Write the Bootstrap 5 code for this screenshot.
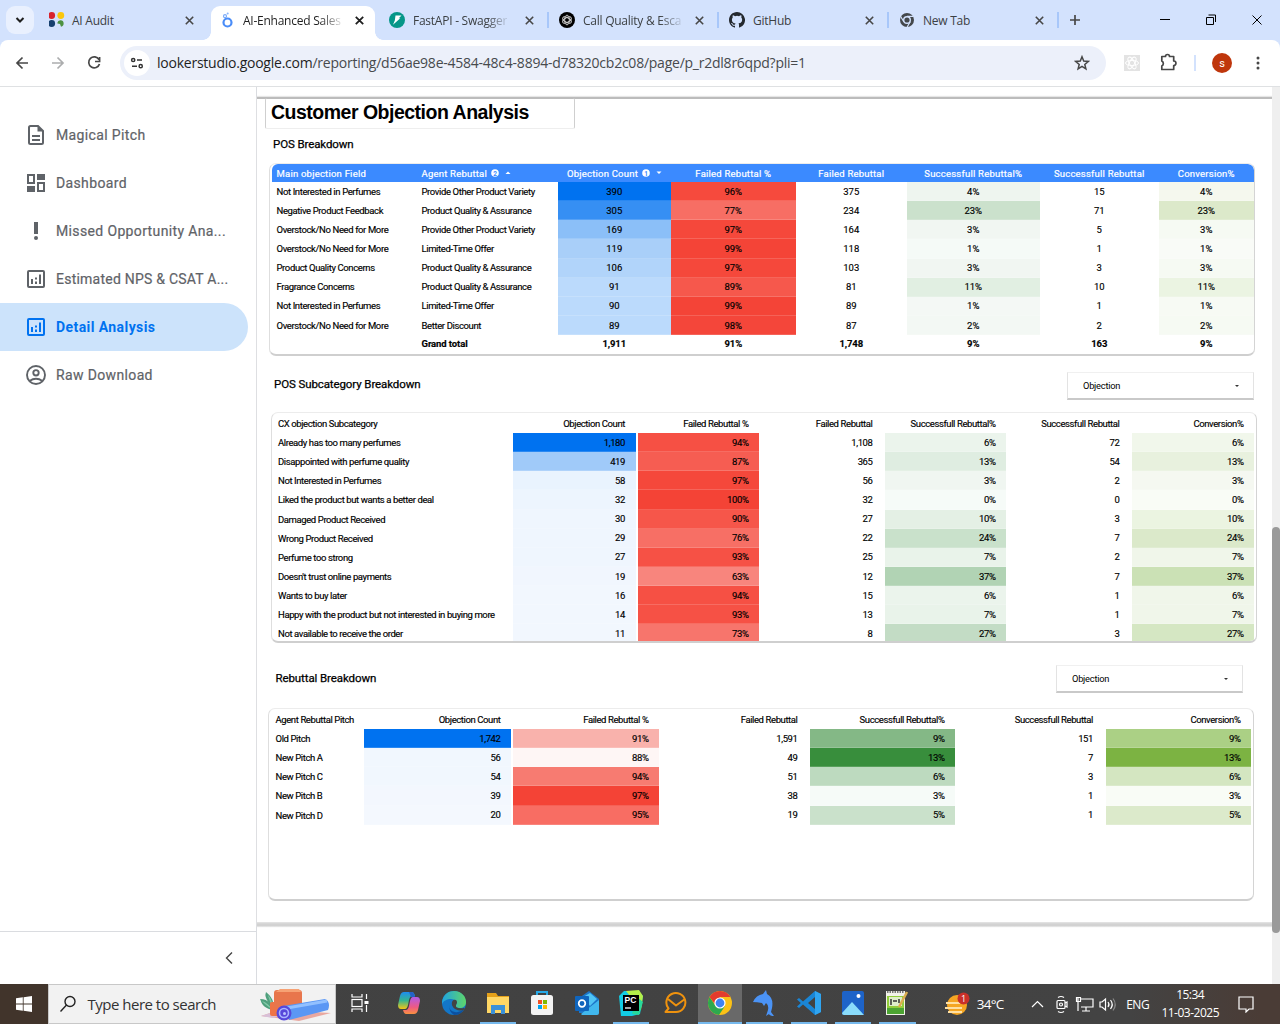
<!DOCTYPE html>
<html lang="en">
<head>
<meta charset="utf-8">
<meta name="viewport" content="width=device-width, initial-scale=1">
<title>AI-Enhanced Sales</title>
<link href="https://cdn.jsdelivr.net/npm/bootstrap@5.3.0/dist/css/bootstrap.min.css" rel="stylesheet">
<style>
html,body{height:1024px;width:1280px;overflow:hidden;background:#fff}
body{font-family:Roboto,"Liberation Sans",sans-serif;color:#000;line-height:1.2}
svg{display:block;flex:none}
/* browser */
.tabstrip{height:40px;background:#d3e2fd;font:12px "Open Sans",sans-serif;color:#3c4043}
.tabsearch{width:28px;height:28px;margin:0 5px 0 6px;border-radius:9px;background:#e9f0fe}
.btab{width:170px;height:40px;padding:0 15.5px 0 10px;position:relative}
.btab .lbl{margin-left:8px;white-space:nowrap;letter-spacing:-.25px}
.btab .fade-end{-webkit-mask-image:linear-gradient(90deg,#000 78%,rgba(0,0,0,.15))}
.btab.sep::after{content:"";position:absolute;right:0;top:12px;width:2px;height:16px;background:#a8c7fa}
.btab.current::before{content:"";position:absolute;left:2px;right:4px;top:6px;bottom:0;background:#fff;border-radius:9px 9px 0 0}
.btab.current{color:#1f1f1f}
.btab.current>*{position:relative}
.foot{position:absolute!important;bottom:0;width:8px;height:8px}
.foot.l{left:-6px;background:radial-gradient(circle at 0 0,#d3e2fd 7.5px,#fff 8px)}
.foot.r{right:-4px;background:radial-gradient(circle at 100% 0,#d3e2fd 7.5px,#fff 8px)}
.tbar{height:47px;border-bottom:1px solid #dfe1e3;background:#fff;border-radius:8px 8px 0 0}
.barwrap{background:#d3e2fd}
.omni{width:986px;height:34px;border-radius:17px;background:#ecf0fa;margin-left:16px;padding:0 16px 0 4px;font:14px "Open Sans",sans-serif;color:#474a4d}
.omni .site{width:26px;height:26px;border-radius:50%;background:#fff}
.url{letter-spacing:-.24px;margin-left:7px;padding-bottom:1px}
.avatar{width:20px;height:20px;border-radius:50%;background:#bf360c;color:#fff;font:11px Roboto;margin-left:16px}
/* sidebar */
.main{height:897px}
.side{width:257px;border-right:1px solid #dadce0}
.side .nav-link{height:48px;padding:0 0 0 26px;gap:10px;color:#5f6368;font-size:14px;letter-spacing:.36px;white-space:nowrap;border-radius:0 24px 24px 0;margin-right:8px;font-weight:400;-webkit-text-stroke:.2px}
.side .nav-link.tight{letter-spacing:.23px}
.side .nav-link.active{background:#cce3fb;color:#0072f0;font-weight:700;letter-spacing:.42px;-webkit-text-stroke:0}
.sidefoot{height:53px;border-top:1px solid #dadce0;padding-right:21px}
/* report */
.report{width:1015px}
.sheet{height:829px;margin-top:10px;border-top:2px solid #bcbcbc;box-shadow:0 -1px 1px #e6e6e6,0 1px 1px #e6e6e6}
.sheetend{height:5px;background:linear-gradient(#e6e6e6,#d2d2d2 40%,#d2d2d2 75%,#eee);margin-top:-4px}
.ttl{width:310px;height:31px;margin:-1px 0 0 8px;padding:0 5px;border:solid #cfcfcf;border-width:0 1px 1px;border-bottom-color:#eee;font:bold 19.5px "Liberation Sans",sans-serif;border-radius:2px;line-height:28px;white-space:nowrap;letter-spacing:-.5px}
.sec{font-size:11.5px;-webkit-text-stroke:.25px;white-space:nowrap;letter-spacing:-.1px}
.s1{margin:9px 0 0 16px;height:14px}
.p1{margin:11px 0 0 12px;height:193px}
.bar2{margin:15px 18px 0 17px;height:30px;align-items:center}
.bar2 .sec{padding-bottom:2px}
.p2{margin:11px 0 0 14px;height:231px}
.bar3{margin:21px 29px 0 18.500px;height:30px;align-items:center}
.p3{margin:14px 0 0 11px;height:193px}
.pane{border-radius:7px;background:#fff;border:1px solid #ececec;border-bottom:2px solid #cfcfcf;border-right-color:#d4d4d4;border-left-color:#dedede;overflow:hidden;width:986px}
.grid{table-layout:fixed;border-collapse:collapse;font-size:9.5px;line-height:11px;-webkit-text-stroke:.15px}
.grid td{padding:0 0 1px}
.grid th{padding:0}
.grid td,.grid th{font-weight:400;white-space:nowrap;height:19.15px;vertical-align:middle;overflow:visible}
.grid tbody td{box-shadow:inset 0 -1px rgba(255,255,255,.16)}
.g1{width:982px;margin-left:1.500px}
.g1 th{height:18px;background:#3b8aff;color:#fff;letter-spacing:.22px;-webkit-text-stroke:.2px;padding-top:1px}
.g1 th:first-child{border-top-left-radius:6px}
.g1 th:last-child{border-top-right-radius:6px}
.g1 td,.g1 th{text-align:center}
.g1 th:nth-child(-n+2),.g1 td:nth-child(-n+2){text-align:left;padding-left:5px}
.g1 td:nth-child(-n+2){letter-spacing:-.38px}
.g1 tr.tot td{font-weight:700;height:17px;letter-spacing:-.1px}
.g2{width:982px}
.g3{width:981.5px;margin-left:.5px}
.gr{letter-spacing:-.4px}
.gr td,.gr th{text-align:right;padding-right:10.5px}
.gr td:first-child,.gr th:first-child{text-align:left;padding:0 0 0 6px}
.gr th{height:20px;padding-top:1px}
.gr td:nth-child(3),.gr th:nth-child(3){padding:0}
.gr td:nth-child(5),.gr th:nth-child(5),.gr td:nth-child(7),.gr th:nth-child(7){padding-right:12.5px}
.dd{width:187px;height:28px;background:#fff;border:1px solid #e3e3e3;border-bottom:2px solid #c9c9c9;border-top-color:#f0f0f0;font-size:9.3px;letter-spacing:-.25px;padding:0 14px 0 15px}
.caret{width:0;height:0;border:2px solid transparent;border-top:2.5px solid #333;border-bottom:0}
.scrl{width:8px;background:#efefef;padding-top:440px}
.thumb{height:406px;border-radius:4px;background:#9a9a9a}
/* taskbar */
.task{height:40px;background:linear-gradient(90deg,#41342b 0 48px,#414141 49px,#434343 1130px,#4a3c36 1260px);color:#fff;font:12px "Open Sans",sans-serif}
.startb{width:48px;height:40px}
.find{width:288px;height:40px;background:#f2f2f2;border:1px solid #c8c8c8;color:#333;font-size:15px;padding:0 2px 0 10px}
.find .hint{letter-spacing:-.5px;margin-left:10.5px}
.app{width:44.4px;height:40px;border-bottom:2px solid transparent;position:relative;flex:none}
.app.view{width:48px;margin-right:3px}
.app.run::after{content:"";position:absolute;left:4px;right:4px;bottom:-2px;height:2px;background:#76b9ed}
.app.on{background:#696969}.app.on::after{left:0;right:0}
.weather{margin-left:25px}
.temp{margin-left:6px;width:30px;font-size:13.5px;letter-spacing:-.7px}
.tray{margin-left:22px}
.lang{margin-left:5.5px;width:24px;letter-spacing:-.5px}
.clock{margin-left:10px;width:60px;line-height:18px;letter-spacing:-.5px;white-space:nowrap}
.note{margin-left:17px}
</style>
</head>
<body class="d-flex flex-column">
<header>
<div class="tabstrip d-flex align-items-center">
  <div class="tabsearch d-flex align-items-center justify-content-center"><svg width="10" height="6" viewBox="0 0 10 6"><path d="M1.500 1 5 4.500 8.500 1" fill="none" stroke="#1f1f1f" stroke-width="2"/></svg></div>
  <div class="btab d-flex align-items-center"><svg width="16" height="16" viewBox="1 0 16 16"><circle cx="3.700" cy="3.500" r="3.400" fill="#d8232e"/><circle cx="12.800" cy="3.500" r="3.400" fill="#fbc70c"/><circle cx="3.700" cy="11.500" r="3.400" fill="#17406f"/><path d="M9.300 11a3.200 3.200 0 1 1 3.700 3.700l-1-2.700-2.500-.5z" fill="#4c9141"/></svg><span class="lbl" style="margin-left:7px">AI Audit</span><svg class="ms-auto" width="9" height="9" viewBox="0 0 9 9"><path d="m.8.8 7.400 7.400m0-7.400L.8 8.200" stroke="#474747" stroke-width="1.600"/></svg></div>
  <div class="btab current d-flex align-items-center"><span class="foot l"></span><span class="foot r"></span><svg width="16" height="16" viewBox="0 0 16 16"><circle cx="8.500" cy="10.500" r="4" fill="none" stroke="#4a8df8" stroke-width="2.200"/><circle cx="6" cy="4.200" r="1.500" fill="none" stroke="#7bacfa" stroke-width="1.200"/><circle cx="8.700" cy="1.500" r="1" fill="#8ab6fb"/></svg><span class="lbl fade-end">AI-Enhanced Sales</span><svg class="ms-auto" width="9" height="9" viewBox="0 0 9 9"><path d="m.8.8 7.400 7.400m0-7.400L.8 8.200" stroke="#1f1f1f" stroke-width="1.800"/></svg></div>
  <div class="btab sep d-flex align-items-center"><svg width="16" height="16" viewBox="0 0 16 16"><circle cx="8" cy="8" r="8" fill="#059688"/><path d="M6.500 3.500h6L9.800 6.300h1.500L4 12.800l1.800-4.300z" fill="#fff"/></svg><span class="lbl fade-end">FastAPI - Swagger</span><svg class="ms-auto" width="9" height="9" viewBox="0 0 9 9"><path d="m.8.8 7.400 7.400m0-7.400L.8 8.200" stroke="#474747" stroke-width="1.600"/></svg></div>
  <div class="btab sep d-flex align-items-center"><svg width="16" height="16" viewBox="0 0 16 16"><circle cx="8" cy="8" r="8" fill="#000"/><g fill="none" stroke="#ccc" stroke-width=".9"><ellipse cx="8" cy="8" rx="2.300" ry="4.800"/><ellipse cx="8" cy="8" rx="2.300" ry="4.800" transform="rotate(60 8 8)"/><ellipse cx="8" cy="8" rx="2.300" ry="4.800" transform="rotate(120 8 8)"/></g></svg><span class="lbl fade-end">Call Quality &amp; Esca</span><svg class="ms-auto" width="9" height="9" viewBox="0 0 9 9"><path d="m.8.8 7.400 7.400m0-7.400L.8 8.200" stroke="#474747" stroke-width="1.600"/></svg></div>
  <div class="btab sep d-flex align-items-center"><svg width="16" height="16" viewBox="0 0 16 16"><path fill="#24292f" d="M8 0C3.580 0 0 3.580 0 8c0 3.540 2.290 6.530 5.470 7.590.4.070.55-.17.55-.38 0-.19-.01-.82-.01-1.490-2.010.37-2.530-.49-2.690-.94-.09-.23-.48-.94-.82-1.130-.28-.15-.68-.52-.01-.53.63-.01 1.080.58 1.230.82.72 1.210 1.870.87 2.330.66.07-.52.28-.87.51-1.070-1.780-.2-3.640-.89-3.640-3.950 0-.87.31-1.590.82-2.150-.08-.2-.36-1.020.08-2.120 0 0 .67-.21 2.200.82a7.600 7.600 0 0 1 4 0c1.530-1.040 2.200-.82 2.200-.82.44 1.100.16 1.920.08 2.120.51.56.82 1.270.82 2.150 0 3.070-1.870 3.750-3.650 3.950.29.25.54.73.54 1.480 0 1.070-.01 1.930-.01 2.200 0 .21.15.46.55.38A8 8 0 0 0 8 0z"/></svg><span class="lbl">GitHub</span><svg class="ms-auto" width="9" height="9" viewBox="0 0 9 9"><path d="m.8.8 7.400 7.400m0-7.400L.8 8.200" stroke="#474747" stroke-width="1.600"/></svg></div>
  <div class="btab sep d-flex align-items-center"><svg width="16" height="16" viewBox="0 0 16 16"><circle cx="8" cy="8" r="7" fill="#43474b"/><circle cx="8" cy="8" r="3.300" fill="#43474b" stroke="#d3e2fd" stroke-width="1.400"/><path d="M8 4.300h6.500M4.800 9.800 1.500 4.300M11.200 9.800 8 15.300" stroke="#d3e2fd" stroke-width="1.200"/></svg><span class="lbl">New Tab</span><svg class="ms-auto" width="9" height="9" viewBox="0 0 9 9"><path d="m.8.8 7.400 7.400m0-7.400L.8 8.200" stroke="#474747" stroke-width="1.600"/></svg></div>
  <svg class="ms-auto" width="210" height="40" viewBox="0 0 210 40"><path d="M5 15v10M0 20h10" stroke="#474747" stroke-width="1.700"/><path d="M90 19.500h10M136.500 17.500h7v7h-7zm2-2.500h7v7M182.500 15.500l9 9m0-9-9 9" fill="none" stroke="#000"/></svg>
</div>
<div class="barwrap"><div class="tbar d-flex align-items-center">
  <svg width="104" height="20" viewBox="0 0 104 20"><g fill="none" stroke-width="1.700"><path d="M28 10H17m5.500-5.500L17 10l5.500 5.500" stroke="#474747"/><path d="M52 10h11m-5.500-5.500L63 10l-5.500 5.500" stroke="#acadae"/><path d="M99 6.600A5.500 5.500 0 1 0 99.500 11M99.600 4v4.500H95" stroke="#474747"/></g></svg>
  <div class="omni d-flex align-items-center">
    <span class="site d-flex align-items-center justify-content-center"><svg width="14" height="14" viewBox="0 0 14 14"><g fill="none" stroke="#333" stroke-width="1.500"><circle cx="3.200" cy="4" r="1.600"/><path d="M7 4h5M2 10.200h5"/><circle cx="10.700" cy="10.200" r="1.600"/></g></svg></span>
    <span class="url text-nowrap"><span style="color:#1f1f1f">lookerstudio.google.com</span>/reporting/d56ae98e-4584-48c4-8894-d78320cb2c08/page/p_r2dl8r6qpd?pli=1</span>
    <svg class="ms-auto" width="16" height="16" viewBox="0 0 16 16"><path d="m8 1.800 1.700 4.300 4.600.3-3.500 3 1.100 4.500L8 11.400l-3.900 2.500 1.100-4.500-3.500-3 4.600-.3z" fill="none" stroke="#474747" stroke-width="1.500"/></svg>
  </div>
  <svg width="90" height="20" viewBox="0 0 90 20"><rect x="18" y="2" width="16" height="16" fill="#e3e3e3"/><g fill="none" stroke="#fff" stroke-width="1"><ellipse cx="26" cy="10" rx="6.500" ry="2.600"/><ellipse cx="26" cy="10" rx="6.500" ry="2.600" transform="rotate(60 26 10)"/><ellipse cx="26" cy="10" rx="6.500" ry="2.600" transform="rotate(120 26 10)"/></g><path d="M55.800 3.500h3.700a2 2 0 0 1 4 0h4.200V8a2 2 0 0 1 0 4.500v4H55.800V13a2.800 2.800 0 0 0 0-5z" fill="none" stroke="#474747" stroke-width="1.700" stroke-linejoin="round"/><path d="M89 2v16" stroke="#d3e2fd" stroke-width="2"/></svg>
  <span class="avatar d-flex align-items-center justify-content-center">s</span>
  <svg class="ms-4" width="4" height="16" viewBox="0 0 4 16"><g fill="#474747"><circle cx="2" cy="3" r="1.500"/><circle cx="2" cy="8" r="1.500"/><circle cx="2" cy="13" r="1.500"/></g></svg>
</div></div>
</header>

<div class="main d-flex">
<aside class="side d-flex flex-column">
  <nav class="nav flex-column pt-4 flex-nowrap">
    <a class="nav-link d-flex align-items-center"><svg width="20" height="22" viewBox="0 0 20 22"><path d="M12 2H4.500Q3 2 3 3.500v15Q3 20 4.500 20h11q1.500 0 1.500-1.500V7z" fill="none" stroke="currentColor" stroke-width="2"/><path d="M11.500 2v5.500H17z" fill="currentColor"/><path d="M6 12h8M6 16h8" stroke="currentColor" stroke-width="1.800"/></svg>Magical Pitch</a>
    <a class="nav-link d-flex align-items-center"><svg width="20" height="20" viewBox="0 0 20 20"><path d="M2 2h6v8H2zM12 10h6v8h-6z" fill="none" stroke="currentColor" stroke-width="2"/><path d="M11 1h8v6h-8zM1 13h8v6H1z" fill="currentColor"/></svg>Dashboard</a>
    <a class="nav-link d-flex align-items-center"><svg width="20" height="20" viewBox="0 0 20 20"><path d="M8 1h4v12H8z" fill="currentColor"/><circle cx="10" cy="17" r="2" fill="currentColor"/></svg>Missed Opportunity Ana...</a>
    <a class="nav-link tight d-flex align-items-center"><svg width="20" height="20" viewBox="0 0 20 20"><rect x="2" y="2" width="16" height="16" rx="1" fill="none" stroke="currentColor" stroke-width="2"/><path d="M6 10v5M14 5.500V15M10 8.500v2M10 12.500V15" stroke="currentColor" stroke-width="2"/></svg>Estimated NPS &amp; CSAT A...</a>
    <a class="nav-link active d-flex align-items-center"><svg width="20" height="20" viewBox="0 0 20 20"><rect x="2" y="2" width="16" height="16" rx="1" fill="none" stroke="currentColor" stroke-width="2"/><path d="M6 10v5M14 5.500V15M10 8.500v2M10 12.500V15" stroke="currentColor" stroke-width="2"/></svg>Detail Analysis</a>
    <a class="nav-link d-flex align-items-center"><svg width="20" height="20" viewBox="0 0 20 20"><g fill="none" stroke="currentColor" stroke-width="1.900"><circle cx="10" cy="10" r="9"/><circle cx="10" cy="7.800" r="2.700"/><path d="M3.500 16q6.500-4.500 13 0"/></g></svg>Raw Download</a>
  </nav>
  <div class="sidefoot mt-auto d-flex align-items-center justify-content-end"><svg width="12" height="14" viewBox="0 0 12 14"><path d="M9 1.500 3.500 7 9 12.500" fill="none" stroke="#444" stroke-width="1.400"/></svg></div>
</aside>

<main class="report">
  <div class="sheet d-flex flex-column">
    <h1 class="ttl">Customer Objection Analysis</h1>
    <div class="sec s1">POS Breakdown</div>
    <div class="pane p1"><table class="grid g1" id="pos"></table></div>
    <div class="d-flex justify-content-between bar2"><span class="sec">POS Subcategory Breakdown</span><div class="dd d-flex align-items-center justify-content-between"><span>Objection</span><i class="caret"></i></div></div>
    <div class="pane p2"><table class="grid gr g2" id="sub"></table></div>
    <div class="d-flex justify-content-between bar3"><span class="sec">Rebuttal Breakdown</span><div class="dd d-flex align-items-center justify-content-between"><span>Objection</span><i class="caret"></i></div></div>
    <div class="pane p3"><table class="grid gr g3" id="reb"></table></div>
  </div>
  <div class="sheetend"></div>
</main>
<div class="scrl"><div class="thumb"></div></div>
</div>

<footer class="task d-flex align-items-center">
  <div class="startb d-flex align-items-center justify-content-center"><svg width="16" height="16" viewBox="0 0 16 16"><path d="M0 2.300 6.800 1.300V7.600H0zM7.600 1.200 16 0v7.600H7.600zM0 8.400h6.800v6.300L0 13.700zM7.600 8.400H16V16l-8.400-1.200z" fill="#fff"/></svg></div>
  <div class="find d-flex align-items-center"><svg width="18" height="20" viewBox="0 0 18 20"><circle cx="11" cy="7.500" r="5" fill="none" stroke="#222" stroke-width="1.400"/><path d="m7.500 11-6 6.500" stroke="#222" stroke-width="1.400"/></svg><span class="hint text-nowrap">Type here to search</span>
    <svg class="ms-auto" width="74" height="36" viewBox="0 0 74 36"><path d="M2 30 20 24l52 3-32 8z" fill="#e9a8a0"/><path d="M2 30 20 24l8 3-14 5z" fill="#d8c0d8"/><path d="M14 24C2 22 2 14 1 13q7 0 9 4-5-6-3-11 6 5 7 10z" fill="#4fa07d"/><path d="M14 24Q4 17 3 15q6 2 11 9Q9 10 9 9q5 5 5 15" fill="#83c9a8"/><rect x="11" y="16" width="18" height="14" rx="2" fill="#ee7446"/><rect x="15" y="4" width="28" height="18" rx="3" fill="#e8764c"/><path d="m17 6 4-3h19l2 3z" fill="#f6a274"/><path d="M24 20 66 13q6 3 3 11L30 34z" fill="#5b97f4"/><path d="m28 22 40-7" stroke="#92c0ff" stroke-width="3"/><circle cx="25" cy="27" r="7.500" fill="#5648da"/><circle cx="25" cy="27" r="4.500" fill="none" stroke="#a9b4ff" stroke-width="1.600"/><circle cx="25.500" cy="27.500" r="1.500" fill="#b9c4ff"/></svg></div>
  <div class="app view d-flex align-items-center justify-content-center"><svg width="20" height="20" viewBox="0 0 20 20"><g fill="none" stroke="#fff" stroke-width="1.200"><path d="M2 1v3h10V1M2 19v-3h10v3"/><rect x="2" y="6.500" width="10" height="7"/><path d="M16.500 1v5M16.500 12v7"/></g><path d="M14.500 8h4v3h-4z" fill="#fff"/></svg></div>
  <div class="app d-flex align-items-center justify-content-center"><svg width="24" height="26" viewBox="0 0 24 26"><defs><linearGradient id="ca" x2="0" y2="1"><stop stop-color="#1d8df0"/><stop offset=".5" stop-color="#35b58f"/><stop offset="1" stop-color="#f6c514"/></linearGradient><linearGradient id="cb" x2="0" y2="1"><stop stop-color="#b05be8"/><stop offset=".6" stop-color="#ee5a83"/><stop offset="1" stop-color="#f9913f"/></linearGradient></defs><path d="M7 2h8q2 0 3 4h-3q-2 0-3 4l-1 5q-1 4-3 4H4q-3 0-3-4L3 6q1-4 4-4z" fill="url(#ca)"/><path d="M17 24H9q-2 0-3-4h3q2 0 3-4l1-5q1-4 3-4h4q3 0 3 4l-2 9q-1 4-4 4z" fill="url(#cb)"/><path d="M8 2h7q2 0 3 5h-4l-2-5z" fill="#2461c9"/></svg></div>
  <div class="app d-flex align-items-center justify-content-center"><svg width="26" height="26" viewBox="0 0 26 26"><defs><linearGradient id="ea"><stop stop-color="#1fa3e0"/><stop offset="1" stop-color="#5fd66a"/></linearGradient></defs><circle cx="13" cy="13" r="12" fill="#1376c8"/><path d="M1 12C2 4 8 1 13 1c8 0 12 6 12 11 0 4-3 6-6 6s-5-1-4-3c2-3-1-6-5-6s-8 2-9 5z" fill="url(#ea)"/><path d="M8 15q0 6 6 7 5 1 9-3-3 6-10 6Q8 22 8 15z" fill="#0c50a0"/><path d="M15 15q2-3 0-5-3-1-4 2-1 4 3 7 6 3 10 0l-1-1q-9 1-8-3z" fill="#434343"/></svg></div>
  <div class="app run d-flex align-items-center justify-content-center"><svg width="24" height="24" viewBox="0 0 24 24"><path d="M1 2h9l2 3h11v17H1z" fill="#e5a11a"/><path d="M1 6h22v16H1z" fill="#ffd765"/><path d="M5 14h14v9h-4v-4H9v4H5z" fill="#3b91d8"/></svg></div>
  <div class="app d-flex align-items-center justify-content-center"><svg width="24" height="26" viewBox="0 0 24 26"><path d="M7 7V2h10v5" fill="none" stroke="#27a9e8" stroke-width="2"/><rect x="1" y="5" width="22" height="20" rx="2.500" fill="#f3f3f3"/><path d="M8 10h4v4H8z" fill="#f25022"/><path d="M13 10h4v4h-4z" fill="#7fba00"/><path d="M8 15h4v4H8z" fill="#00a4ef"/><path d="M13 15h4v4h-4z" fill="#ffb900"/></svg></div>
  <div class="app d-flex align-items-center justify-content-center"><svg width="26" height="26" viewBox="0 0 26 26"><path d="M5 8 15 1l10 8v14H5z" fill="#1c75c8"/><path d="m9 7 7-4 7 6-7 7z" fill="#50c4f4"/><path d="m7 24 18-14v13q0 2-2 2H8z" fill="#41b8ee"/><rect x="1" y="6" width="14" height="15" rx="1" fill="#0f65bd"/><circle cx="8" cy="13.500" r="3.300" fill="none" stroke="#fff" stroke-width="1.700"/></svg></div>
  <div class="app run d-flex align-items-center justify-content-center"><svg width="26" height="26" viewBox="0 0 26 26"><path d="M1 6 6 1h14l5 5-3 18-8 2H3z" fill="#12cde4"/><path d="m8 1 13-1 4 6-2 14z" fill="#b5ef4a"/><path d="m19 7 6 5-4 13-7-1z" fill="#28d99a"/><rect x="5" y="5" width="16" height="16" fill="#000"/><text x="6.500" y="13" font-family="Liberation Sans" font-weight="bold" font-size="8.500" fill="#fff">PC</text><path d="M7 18h6" stroke="#fff" stroke-width="1.300"/></svg></div>
  <div class="app d-flex align-items-center justify-content-center"><svg width="24" height="24" viewBox="0 0 24 24"><g fill="none" stroke="#ef920e" stroke-width="2" stroke-linejoin="round"><path d="M4.500 17.500A9.500 9.500 0 1 1 12 21H1.500z"/><path d="m4 8 8 6.500L21 8"/></g></svg></div>
  <div class="app run on d-flex align-items-center justify-content-center"><svg width="26" height="26" viewBox="0 0 26 26"><circle cx="13" cy="13" r="12" fill="#fbc116"/><path d="M2.600 7A12 12 0 0 0 12 25l6-9-5 2-5-3z" fill="#2da94f"/><path d="M2.600 7A12 12 0 0 1 23.400 7H13l-5 7z" fill="#e33b2e"/><circle cx="13" cy="13" r="5.600" fill="#fff"/><circle cx="13" cy="13" r="4.400" fill="#3f83f2"/></svg></div>
  <div class="app run d-flex align-items-center justify-content-center"><svg width="24" height="28" viewBox="0 0 24 28"><path d="M1 13Q4 6 11 5l3-4 1 4q7 4 5 14l-1 4 3 4q-4 0-5-2l-3 2 2-6q1-5-2-7l-2 3-2-3q-5-1-10-1z" fill="#4b93f5"/></svg></div>
  <div class="app run d-flex align-items-center justify-content-center"><svg width="26" height="26" viewBox="0 0 26 26"><path d="m19 1 6 3v18l-6 3L7 14.500 3 18l-2-1.500 3.800-3.500L1 9.500 3 8l4 3.500zm0 6-7 6 7 6z" fill="#1a86d6"/><path d="m19 1 6 3v18l-6 3z" fill="#30a5f1"/></svg></div>
  <div class="app run d-flex align-items-center justify-content-center"><svg width="24" height="26" viewBox="0 0 24 26"><rect x="1" y="1" width="22" height="24" rx="2" fill="#1d63c8"/><path d="m1 23 10-11 12 13H3q-2 0-2-2z" fill="#8adcfb"/><circle cx="17.500" cy="6" r="2" fill="#fff"/></svg></div>
  <div class="app run d-flex align-items-center justify-content-center"><svg width="24" height="28" viewBox="0 0 24 28"><path d="M1 2h19v24H1z" fill="#f2f2ea"/><path d="M2 7h17v18H2z" fill="#92cd3b"/><path d="M2 19h17v6H2z" fill="#4ca432"/><path d="M4 8h13v9H4z" fill="#dfeeca"/><path d="M2 3h17" stroke="#777" stroke-width="2" stroke-dasharray="1.500 1"/><path d="M6 10v6M8 12h4M14 10v4" stroke="#333" stroke-width="1.500"/><path d="m14 18 8-15" stroke="#dcae50" stroke-width="2.500"/></svg></div>
  <svg class="weather" width="26" height="26" viewBox="0 0 26 26"><circle cx="12" cy="14" r="10" fill="#f5a623"/><path d="M1 12h14M0 17h17M3 21h14" stroke="#ffe0a3" stroke-width="2"/><circle cx="18.500" cy="7.500" r="6" fill="#c9302a"/><text x="16" y="11" font-family="Open Sans" font-size="9" fill="#fff">1</text></svg>
  <span class="temp">34°C</span>
  <svg class="tray" width="92" height="20" viewBox="0 0 92 20"><g fill="none" stroke="#fff" stroke-width="1.200"><path d="m3 13 5.500-5.500L14 13"/><rect x="28" y="6.500" width="8" height="8" rx="1"/><path d="M29 3.500q3-2 6 0M29 17.500q3 2 6 0M36 9l2-1v5l-2-1"/><circle cx="32" cy="10.500" r="1.500"/><path d="M52 5h12v8H52M57 13v4M53 17h8M49 4v13M47.500 3.500h4v4h-4z"/><path d="M71 8v5h2l3.500 3V5L73 8zM79 8q2 2.500 0 5M81.500 6q3.500 4.500 0 9"/><path d="M84 4.500q4.500 6 0 12" stroke="#888"/></g></svg>
  <span class="lang">ENG</span>
  <div class="clock text-center">15:34<br>11-03-2025</div>
  <svg class="note" width="18" height="18" viewBox="0 0 18 18"><path d="M2 2h14v12h-4l-3 3v-3H2z" fill="none" stroke="#fff" stroke-width="1.200"/></svg>
</footer>

<script>
function build(id,widths,head,rows,colors,total){
  const cg='<colgroup>'+widths.map(w=>`<col style="width:${w}px">`).join('')+'</colgroup>';
  const th='<thead><tr>'+head.map(h=>`<th>${h}</th>`).join('')+'</tr></thead>';
  const tb=rows.map((r,i)=>'<tr>'+r.split('|').map((c,j)=>{
    const k=colors[j]; return `<td${k&&k[i]?` style="background:${k[i]}"`:''}>${c}</td>`}).join('')+'</tr>').join('');
  const tt=total?'<tr class="tot">'+total.map(c=>`<td>${c}</td>`).join('')+'</tr>':'';
  document.getElementById(id).innerHTML=cg+th+'<tbody>'+tb+tt+'</tbody>';
}
const pill=n=>`<svg class="d-inline-block align-middle" style="margin:-2px 0 0 1px" width="8" height="8" viewBox="0 0 8 8"><circle cx="4" cy="4" r="3.800" fill="#fff"/><text x="2.200" y="6.500" font-family="Roboto" font-size="6.500" font-weight="bold" fill="#3b8aff">${n}</text></svg>`;
const tri=d=>`<svg class="d-inline-block align-middle" style="margin:-2px 0 0 6px" width="6" height="4" viewBox="0 0 6 4"><path d="${d}" fill="#fff"/></svg>`;
build('pos',[145,141,113.500,124.500,111.500,132.500,119.500,94.500],
 ['Main objection Field','Agent Rebuttal '+pill(2)+tri('M.5 3 3 .5 5.500 3z'),'Objection Count '+pill(1)+tri('M.5 .5 3 3 5.500 .5z'),'Failed Rebuttal %','Failed Rebuttal','Successfull Rebuttal%','Successfull Rebuttal','Conversion%'],
 ['Not Interested in Perfumes|Provide Other Product Variety|390|96%|375|4%|15|4%',
  'Negative Product Feedback|Product Quality &amp; Assurance|305|77%|234|23%|71|23%',
  'Overstock/No Need for More|Provide Other Product Variety|169|97%|164|3%|5|3%',
  'Overstock/No Need for More|Limited-Time Offer|119|99%|118|1%|1|1%',
  'Product Quality Concerns|Product Quality &amp; Assurance|106|97%|103|3%|3|3%',
  'Fragrance Concerns|Product Quality &amp; Assurance|91|89%|81|11%|10|11%',
  'Not Interested in Perfumes|Limited-Time Offer|90|99%|89|1%|1|1%',
  'Overstock/No Need for More|Better Discount|89|98%|87|2%|2|2%'],
 {2:['#0072f0','#368ff3','#8bbff8','#a9cff9','#b1d4fa','#bbdafc','#bbdafc','#bbdafc'],
  3:['#f64a3d','#f76e64','#f5483b','#f44437','#f5483b','#f6584c','#f44437','#f4463a'],
  5:['#eef5ef','#cbe1cc','#f1f6f2','#f5faf7','#f1f6f2','#e1efe2','#f4f8f5','#f3f8f4'],
  7:['#f5f8ee','#dce9ca','#f6faf3','#f9fbf7','#f6faf3','#ebf4e2','#f7faf4','#f6faf3']},
 ['','Grand total','1,911','91%','1,748','9%','163','9%']);
const H=['Objection Count','Failed Rebuttal %','Failed Rebuttal','Successfull Rebuttal%','Successfull Rebuttal','Conversion%'];
build('sub',[240.500,123,2.500,121,126,121,126,122],['CX objection Subcategory',H[0],'',...H.slice(1)],
 ['Already has too many perfumes|1,180||94%|1,108|6%|72|6%','Disappointed with perfume quality|419||87%|365|13%|54|13%','Not Interested in Perfumes|58||97%|56|3%|2|3%','Liked the product but wants a better deal|32||100%|32|0%|0|0%','Damaged Product Received|30||90%|27|10%|3|10%','Wrong Product Received|29||76%|22|24%|7|24%','Perfume too strong|27||93%|25|7%|2|7%',"Doesn't trust online payments|19||63%|12|37%|7|37%",'Wants to buy later|16||94%|15|6%|1|6%','Happy with the product but not interested in buying more|14||93%|13|7%|1|7%','Not available to receive the order|11||73%|8|27%|3|27%'],
 {1:['#0072f0','#a0caf9','#e9f3fe','#edf5fe','#eff6fe','#eff6fe','#eff6fe','#f1f6fe','#f2f7fe','#f2f7fe','#f2f7fe'],
  3:['#f65044','#f65d52','#f5483b','#f44336','#f6564a','#f76f65','#f65145','#f8857d','#f65044','#f65145','#f7756c'],
  5:['#ebf4ec','#dfede1','#f0f6f1','#f6fbf8','#e4f0e5','#c9e1cb','#e9f3ea','#b1d3b4','#ebf4ec','#e9f3ea','#c3dcc5'],
  7:['#f1f7eb','#e8f1de','#f5f8f1','#f9fcf6','#ebf4e1','#dbe9ca','#f0f6ea','#cbe1b5','#f0f6ea','#f0f6ea','#d5e7c3']});
build('reb',[94.500,147,2,146,151,145,150.500,145.500],['Agent Rebuttal Pitch',H[0],'',...H.slice(1)],
 ['Old Pitch|1,742||91%|1,591|9%|151|9%','New Pitch A|56||88%|49|13%|7|13%','New Pitch C|54||94%|51|6%|3|6%','New Pitch B|39||97%|38|3%|1|3%','New Pitch D|20||95%|19|5%|1|5%'],
 {1:['#0072f0','#f1f7fe','#f1f7fe','#f3f7fe','#f4f8fe'],3:['#f9b2ac','#fef6f5','#f77b71','#f44336','#f86d63'],
  5:['#84b886','#388e3c','#bddabf','#f6fbf8','#cae1cb'],7:['#abd085','#7cb342','#d4e6c1','#f9fcf6','#dceacb']});
</script>
<script src="https://cdn.jsdelivr.net/npm/bootstrap@5.3.0/dist/js/bootstrap.bundle.min.js"></script>
</body>
</html>
